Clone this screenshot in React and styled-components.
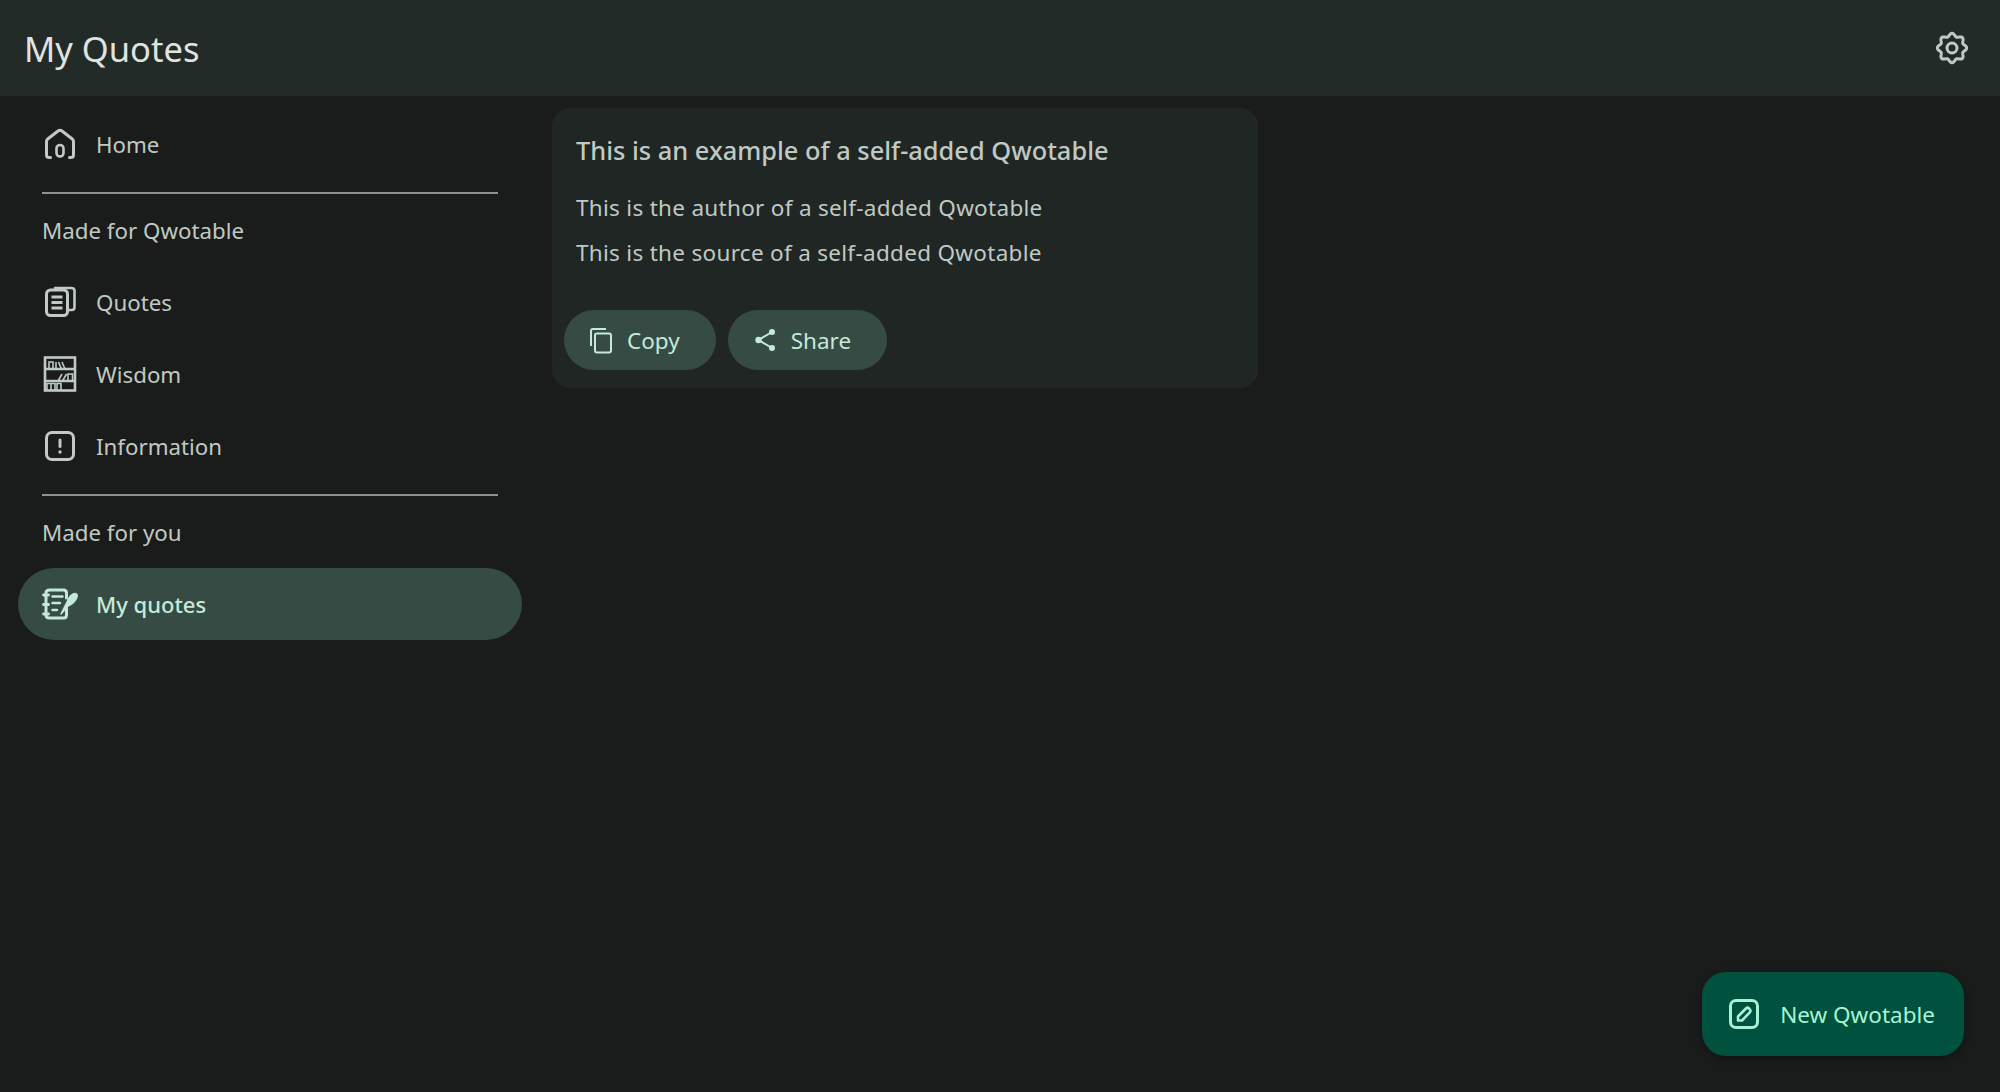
import styled, { createGlobalStyle } from "styled-components";

const GlobalStyle = createGlobalStyle`
  html, body {
    margin: 0;
    padding: 0;
    height: 100%;
    background: #191c1b;
  }
  #root {
    height: 100%;
  }
`;

const Page = styled.div`
  position: relative;
  height: 1092px;
  overflow: hidden;
  background: #191c1b;
  color: #c0c9c3;
  font-family: "Noto Sans", sans-serif;
`;

const AppBar = styled.header`
  height: 96px;
  padding: 0 30px 0 24px;
  box-sizing: border-box;
  display: flex;
  align-items: center;
  justify-content: space-between;
  background: #232b29;
`;

const Title = styled.h1`
  margin: 0;
  font-size: 34.5px;
  font-weight: 400;
  color: #e1e3e0;
`;

const Body = styled.div`
  display: flex;
`;

const Drawer = styled.nav`
  width: 540px;
  padding: 12px 18px;
  box-sizing: border-box;
  flex-shrink: 0;
`;

const NavRow = styled.div`
  height: 72px;
  padding: 0 24px;
  display: flex;
  align-items: center;
  gap: 18px;
  border-radius: 36px;
  font-size: ${(p) => (p.$active ? "22px" : "22.3px")};
  font-weight: ${(p) => (p.$active ? 500 : 400)};
  background: ${(p) => (p.$active ? "#364b43" : "transparent")};
  color: ${(p) => (p.$active ? "#c5e9da" : "#c0c9c3")};
`;

const NavIcon = styled.svg`
  width: 36px;
  height: 36px;
  flex-shrink: 0;
  overflow: visible;
`;

const Divider = styled.hr`
  margin: 12px 24px 0;
  border: 0;
  height: 2px;
  background: #8a938e;
`;

const SectionLabel = styled.div`
  height: 72px;
  padding: 0 24px;
  display: flex;
  align-items: center;
  font-size: 22.3px;
  color: #c0c9c3;
`;

const Main = styled.main`
  padding: 12px;
`;

const Card = styled.article`
  width: 706px;
  height: 280px;
  box-sizing: border-box;
  padding: 24px 12px 18px;
  border-radius: 18px;
  background: #1f2624;
  display: flex;
  flex-direction: column;
`;

const CardTitle = styled.h2`
  margin: 0 12px 22px;
  font-size: 25.4px;
  font-weight: 500;
  line-height: 36px;
  color: #c0c9c3;
`;

const CardLine = styled.p`
  margin: 0 12px 9px;
  font-size: 22.5px;
  letter-spacing: 0.3px;
  line-height: 36px;
  color: #c0c9c3;
`;

const Actions = styled.div`
  margin-top: auto;
  display: flex;
  gap: 12px;
`;

const ActionButton = styled.button`
  height: 60px;
  padding: 0 36px 0 24px;
  display: flex;
  align-items: center;
  gap: 12px;
  border: 0;
  border-radius: 30px;
  background: #364b43;
  color: #c5e9da;
  font-family: inherit;
  font-size: 22.5px;
`;

const ActionIcon = styled.svg`
  width: 27px;
  height: 27px;
`;

const Fab = styled.button`
  position: absolute;
  right: 36px;
  bottom: 36px;
  height: 84px;
  padding: 0 29px 0 24px;
  display: flex;
  align-items: center;
  gap: 18px;
  border: 0;
  border-radius: 24px;
  background: #00513d;
  color: #a7f3d3;
  font-family: inherit;
  font-size: 22.5px;
  box-shadow: 0 3px 8px rgba(0, 0, 0, 0.3);
`;

const stroke = {
  fill: "none",
  stroke: "currentColor",
  strokeWidth: 3,
  strokeLinecap: "round",
  strokeLinejoin: "round",
};

const flowerPath = () => {
  const points = [];
  for (let i = 0; i < 96; i++) {
    const a = (i / 96) * Math.PI * 2;
    const r = 13.2 + 1.5 * Math.cos(8 * a);
    points.push(`${(18 + r * Math.sin(a)).toFixed(2)} ${(18 - r * Math.cos(a)).toFixed(2)}`);
  }
  return `M${points.join("L")}Z`;
};

const HomeGlyph = () => (
  <NavIcon viewBox="0 0 36 36" {...stroke}>
    <path d="M8.500 31.500H7Q4.500 31.500 4.500 29V15.500Q4.500 14 5.700 13L16 5Q18 3.500 20 5L30.300 13Q31.500 14 31.500 15.500V29Q31.500 31.500 29 31.500H27.500" />
    <rect x="14.500" y="19" width="7" height="11.500" rx="3.500" strokeWidth="2.600" />
  </NavIcon>
);

const QuotesGlyph = () => (
  <NavIcon viewBox="0 0 36 36" {...stroke}>
    <rect x="4.500" y="6" width="21" height="25.500" rx="4" />
    <path d="M26.500 26H30Q32.500 26 32.500 23V7Q32.500 4 29.500 4H13" strokeWidth="2.600" />
    <path d="M9.500 13H20.500M9.500 18.500H20.500M9.500 24H20.500" strokeWidth="2.800" strokeLinecap="butt" />
  </NavIcon>
);

const WisdomGlyph = () => (
  <NavIcon viewBox="0 0 36 36" fill="none" stroke="currentColor" strokeWidth="2.600">
    <rect x="3" y="1.500" width="30" height="33" />
    <path d="M3 13H33M3 25H33" />
    <path
      d="M7 13V6H11V13M14 13V6M16.500 6L19.500 13M20 6L23 13M16 25L20 18M20.500 25L24.500 18M26 25V18H30.500V25M5 34V27.500H9V34M9 34V27.500H13V34M15 34V27.500H19V34"
      strokeWidth="1.600"
    />
  </NavIcon>
);

const InfoGlyph = () => (
  <NavIcon viewBox="0 0 36 36" {...stroke}>
    <rect x="4.500" y="4.500" width="27" height="27" rx="5.500" />
    <path d="M18 12V18.500" />
    <path d="M18 24V24.100" strokeWidth="3.400" />
  </NavIcon>
);

const NotesGlyph = () => (
  <NavIcon viewBox="0 0 36 36" {...stroke}>
    <path d="M24.500 12V7Q24.500 4 21.500 4H7.500Q4 4 4 7V29Q4 32 7.500 32H21.500Q24.500 32 24.500 29V21" />
    <path d="M1.500 9H6.500M1.500 18.500H6.500M1.500 28H6.500" strokeWidth="2.800" />
    <path d="M10.500 10.500H20.500M10.500 17H18M10.500 24H15" strokeWidth="2.400" />
    <path d="M19 28L25 16Q28 8 33 7.500Q36 8 35 11Q33 17 26 20Z" fill="currentColor" strokeWidth="1.500" />
  </NavIcon>
);

const SettingsGlyph = () => (
  <NavIcon viewBox="0 0 36 36" {...stroke}>
    <path d={flowerPath()} />
    <circle cx="18" cy="18" r="5" />
  </NavIcon>
);

const EditGlyph = () => (
  <NavIcon viewBox="0 0 36 36" {...stroke}>
    <rect x="4.500" y="4.500" width="27" height="27" rx="5.500" />
    <path d="M12 24.500V20.500L20 12.500Q21.500 11 23 12.500L23.800 13.300Q25.300 14.800 23.800 16.300L16 24.500Z" strokeWidth="2.600" />
  </NavIcon>
);

const CopyGlyph = () => (
  <ActionIcon viewBox="0 0 27 27" fill="none" stroke="currentColor" strokeWidth="2">
    <path d="M3 19V4Q3 2 5 2H18" />
    <rect x="7" y="6.500" width="16" height="19" rx="2" />
  </ActionIcon>
);

const ShareGlyph = () => (
  <ActionIcon viewBox="0 0 27 27" fill="currentColor" stroke="currentColor" strokeWidth="2">
    <circle cx="20" cy="5" r="2" />
    <circle cx="6.500" cy="13" r="2.200" />
    <circle cx="20" cy="21" r="2" />
    <path d="M20 5L6.500 13L20 21" fill="none" />
  </ActionIcon>
);

const App = () => (
  <Page>
    <GlobalStyle />
    <AppBar>
      <Title>My Quotes</Title>
      <SettingsGlyph />
    </AppBar>
    <Body>
      <Drawer>
        <NavRow>
          <HomeGlyph />
          Home
        </NavRow>
        <Divider />
        <SectionLabel>Made for Qwotable</SectionLabel>
        <NavRow>
          <QuotesGlyph />
          Quotes
        </NavRow>
        <NavRow>
          <WisdomGlyph />
          Wisdom
        </NavRow>
        <NavRow>
          <InfoGlyph />
          Information
        </NavRow>
        <Divider />
        <SectionLabel>Made for you</SectionLabel>
        <NavRow $active>
          <NotesGlyph />
          My quotes
        </NavRow>
      </Drawer>
      <Main>
        <Card>
          <CardTitle>This is an example of a self-added Qwotable</CardTitle>
          <CardLine>This is the author of a self-added Qwotable</CardLine>
          <CardLine>This is the source of a self-added Qwotable</CardLine>
          <Actions>
            <ActionButton>
              <CopyGlyph />
              Copy
            </ActionButton>
            <ActionButton>
              <ShareGlyph />
              Share
            </ActionButton>
          </Actions>
        </Card>
      </Main>
    </Body>
    <Fab>
      <EditGlyph />
      New Qwotable
    </Fab>
  </Page>
);

export default App;
